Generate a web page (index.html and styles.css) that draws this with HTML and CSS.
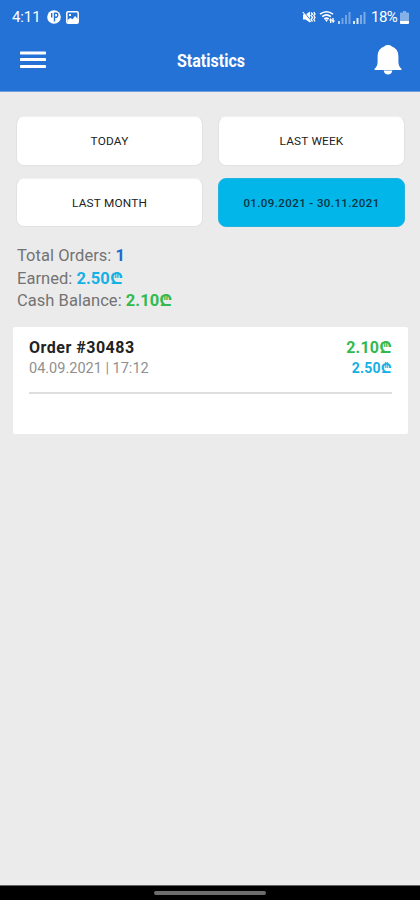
FILE: index.html
```html
<!DOCTYPE html>
<html lang="en">
<head>
<meta charset="utf-8">
<title>Statistics</title>
<link rel="stylesheet" href="styles.css">
</head>
<body>
<header class="header">
  <div class="status">
    <span class="clock">4:11</span>
    <svg class="status-app" width="14" height="14" viewBox="0 0 14 14"><circle cx="7" cy="7" r="6.8" fill="#fff"/><path d="M4.700 3v4.500M7.500 2.500v9M7.500 3.300h2q1.300 0 1.300 1.700T9.500 7.300h-2" fill="none" stroke="#2472d6" stroke-width="1.400"/></svg>
    <svg class="status-image" width="13" height="13" viewBox="0 0 13 13"><rect x=".8" y=".8" width="11.4" height="11.4" rx="1.3" fill="#2472d6" stroke="#fff" stroke-width="1.5"/><path d="M1.5 9 4.3 7l2.3 1.200L9 5l3 3V12H1.5zM3 3h2v2H3z" fill="#fff"/></svg>
    <div class="status-right">
      <svg width="14" height="14" viewBox="0 0 14 14" fill="none" stroke="#fff"><path d="M1 4.500h2.500L8 1.500v11L3.500 9.500H1z" fill="#fff" stroke="none"/><path d="M1.500 1.300l7.500 9.500" stroke="#2472d6"/><path d="M.8 2l8 10" stroke-width="1.200"/><path d="M9 2.500l1.500 1.500L9 5.500l1.500 2L9 9.500l1.500 2M11.800 2l1.200 2-1.200 1.500L13 7.500l-1.200 2 1.200 2" stroke-width="1.300"/></svg>
      <svg class="wifi" width="17" height="14" viewBox="0 0 17 14" fill="none" stroke="#fff" stroke-width="1.600"><path d="M1 4.200q6.500-5 13 0M3.200 6.700q4.300-3.500 8.600 0M5.300 9q2.200-1.700 4.400 0"/><path d="M5.800 9.500h3.400l-1.700 2.500zM10 10.500l1.700-2.500 1.700 2.500h-1V13h-1.400v-2.500zM13.300 10.500V8h1.400v2.500h1.500L14 13.300l-1.200-2.800z" fill="#fff" stroke="none"/></svg>
      <svg width="13" height="13" viewBox="0 0 13 13" fill="#fff"><path opacity=".7" d="M0 10h2v3H0z"/><path opacity=".35" d="M3.500 7h2v6h-2zM7 4h2v9H7zM10.500 1h2v12h-2z"/></svg>
      <svg class="signal" width="13" height="13" viewBox="0 0 13 13" fill="#fff"><path opacity=".85" d="M0 10h2v3H0zM3.500 7h2v6h-2z"/><path opacity=".4" d="M7 4h2v9H7zM10.500 1h2v12h-2z"/></svg>
      <span class="percent">18%</span>
      <svg class="battery" width="9" height="13" viewBox="0 0 9 13"><path d="M3 0h3v1.500h2Q9 1.500 9 2.500V10H0V2.500q0-1 1-1h2z" fill="#fff" opacity=".45"/><path d="M0 10h9V12q0 1-1 1H1q-1 0-1-1z" fill="#fff"/></svg>
    </div>
  </div>
  <div class="appbar">
    <svg width="26" height="18" viewBox="0 0 26 18" fill="#fff"><rect y=".4" width="26" height="3" rx=".7"/><rect y="7.100" width="26" height="3" rx=".7"/><rect y="13.900" width="26" height="3" rx=".7"/></svg>
    <h1 class="title"><span class="title-text">Statistics</span></h1>
    <svg width="28" height="31" viewBox="0 0 28 31" fill="#fff"><path d="M14 0q2.800 0 3.500 1.300Q24 3.500 24.400 11v6q.2 4.800 3 6.700V25H.6V23.700q2.800-1.900 3-6.700v-6Q4 3.500 10.500 1.300 11.200 0 14 0zM9.700 25.500h8.600Q17.800 29.500 14 29.500t-4.300-4z"/></svg>
  </div>
</header>
<main class="content">
  <div class="filters">
    <button class="filter">TODAY</button>
    <button class="filter">LAST WEEK</button>
    <button class="filter">LAST MONTH</button>
    <button class="filter active">01.09.2021 - 30.11.2021</button>
  </div>
  <section class="summary">
    <div>Total Orders: <b class="blue">1</b></div>
    <div>Earned: <b class="cyan">2.50₾</b></div>
    <div>Cash Balance: <b class="green">2.10₾</b></div>
  </section>
  <article class="order">
    <div class="row"><span class="number">Order #30483</span><span class="total green">2.10₾</span></div>
    <div class="row"><span class="date">04.09.2021 | 17:12</span><span class="earned cyan">2.50₾</span></div>
    <div class="divider"></div>
  </article>
</main>
<footer class="navbar"><div class="handle"></div></footer>
</body>
</html>
```
FILE: styles.css
```css
* { box-sizing: border-box; }
body {
  margin: 0;
  height: 900px;
  display: flex;
  flex-direction: column;
  overflow: hidden;
  background: #ebebeb;
  font-family: Roboto, "Noto Sans", sans-serif;
}
svg { display: block; flex: none; }
.header { height: 92px; flex: none; background: #2472d6; color: #fff; border-bottom: 1px solid #6f9edb; }
.status { height: 34px; padding: 0 11px 0 12px; display: flex; align-items: center; }
.clock { width: 28px; font-size: 15px; letter-spacing: -.1px; }
.status-app { margin-left: 7px; }
.status-image { margin-left: 5px; }
.status-right { margin-left: auto; display: flex; align-items: center; }
.wifi { margin: 0 2px 0 3px; }
.signal { margin-left: 2px; }
.percent { margin-left: 5px; width: 28px; font-size: 15px; letter-spacing: -.5px; white-space: nowrap; }
.battery { margin-left: 1px; }
.appbar { height: 52px; padding: 0 18px 0 20px; display: flex; align-items: center; justify-content: space-between; }
.title { margin: 2px 0 0 1px; font-size: 17.500px; line-height: 22px; font-weight: 700; width: 68px; white-space: nowrap; }
.title-text { display: inline-block; transform: scaleX(.915); transform-origin: left; }
.content { flex: 1; padding: 24px 12px 0; }
.filters { display: grid; grid-template-columns: 1fr 1fr; gap: 12px 15px; padding: 0 3px 0 4px; }
.filter {
  height: 49.500px;
  border: 1px solid #e2e2e2;
  border-top-color: #f1f1f1;
  border-radius: 8px;
  padding: 1px 0 0;
  background: #fff;
  color: #222;
  font: 400 11.800px Roboto, sans-serif;
  letter-spacing: .2px;
  white-space: nowrap;
}
.active { background: #03b6e9; border-color: #20b4df; color: #073545; font-size: 11.500px; font-weight: 500; letter-spacing: .4px; }
.summary { padding: 18px 5px 0; color: #737373; font-size: 16.500px; letter-spacing: .04px; line-height: 22.700px; }
.summary b { font-weight: 700; }
.summary .blue { color: #2268cf; }
.cyan { color: #16b0e5; }
.green { color: #32ba50; }
.order { margin: 14px 0 0 1px; width: 395px; height: 107px; background: #fff; border-radius: 2px; padding: 10px 16px 0; }
.row { display: flex; justify-content: space-between; line-height: 21px; }
.number { font-weight: 700; font-size: 16px; letter-spacing: .5px; color: #222; }
.total { font-weight: 700; font-size: 16px; letter-spacing: .2px; }
.date { font-size: 14.500px; color: #909090; }
.earned { font-weight: 700; font-size: 14px; letter-spacing: .2px; }
.divider { height: 2px; background: #dedede; margin-top: 13px; }
.navbar { height: 15px; flex: none; background: #000; border-top: 1px solid #666; display: flex; justify-content: center; padding-top: 5px; }
.handle { width: 112px; height: 4px; border-radius: 2px; background: #6d6d6d; }
```
